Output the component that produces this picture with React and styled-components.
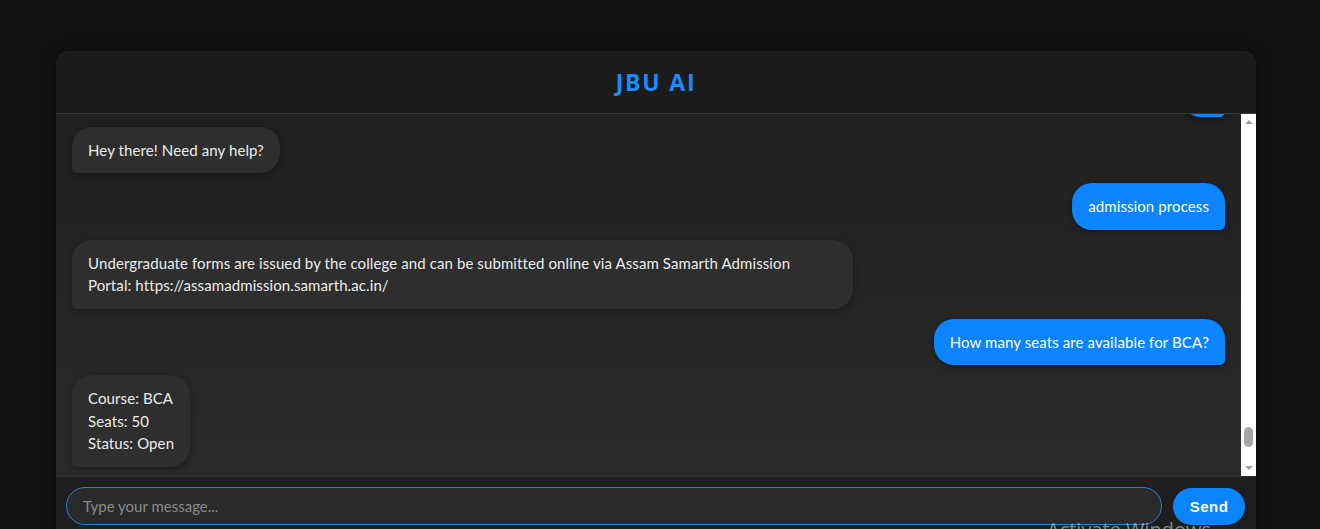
import React, { useLayoutEffect, useRef, useState } from 'react';
import styled, { createGlobalStyle } from 'styled-components';

const GlobalStyle = createGlobalStyle`
  html, body { margin: 0; padding: 0; height: 100%; overflow: hidden; background: #121212; }
  body { font-family: Lato, "Noto Sans", sans-serif; }
  *, *::before, *::after { box-sizing: border-box; }
`;

const Page = styled.div`
  padding: 51px 0 0 56px;
  display: flex;
`;

const Chat = styled.div`
  width: 1200px;
  height: 500px;
  display: flex;
  flex-direction: column;
  background: #1e1e1e;
  border-radius: 12px;
  overflow: hidden;
  box-shadow: 0 0 18px rgba(0, 0, 0, 0.45);
`;

const Header = styled.header`
  height: 63px;
  flex-shrink: 0;
  display: flex;
  align-items: center;
  justify-content: center;
  background: #1b1b1b;
  border-bottom: 1px solid #343434;
`;

const Title = styled.h1`
  margin: 0;
  font-family: "Open Sans", sans-serif;
  font-weight: 700;
  font-size: 23px;
  letter-spacing: 1.8px;
  color: #1a8cff;
`;

const Pane = styled.div`
  height: 362px;
  flex-shrink: 0;
  display: flex;
  background: linear-gradient(180deg, #202020 0%, #2a2a2a 100%);
`;

const Messages = styled.div`
  flex: 1;
  min-width: 0;
  overflow-y: scroll;
  display: flex;
  flex-direction: column;
  gap: 10px;
  padding: 10px 16px 9px;
  scrollbar-width: none;
  &::-webkit-scrollbar { display: none; }
`;

const Rail = styled.div`
  width: 15px;
  flex-shrink: 0;
  display: flex;
  flex-direction: column;
  background: #ffffff;
`;

const ArrowButton = styled.div`
  height: 16px;
  flex-shrink: 0;
  display: flex;
  align-items: center;
  justify-content: center;
  &::before {
    content: '';
    width: 0;
    height: 0;
    border-left: 4px solid transparent;
    border-right: 4px solid transparent;
    ${(p) => (p.$down ? 'border-top: 4px solid #a3a3a3;' : 'border-bottom: 4px solid #a3a3a3;')}
  }
`;

const Track = styled.div`
  flex: 1;
  position: relative;
`;

const Thumb = styled.div`
  position: absolute;
  left: 3px;
  right: 3px;
  border-radius: 5px;
  background: #a6a6a6;
`;

const Bubble = styled.div`
  align-self: ${(p) => (p.$user ? 'flex-end' : 'flex-start')};
  max-width: 781px;
  padding: 12px 16px;
  font-size: 15px;
  line-height: 22.5px;
  letter-spacing: 0.1px;
  white-space: pre-line;
  color: ${(p) => (p.$user ? '#ffffff' : '#ececec')};
  background: ${(p) => (p.$user ? '#0a84ff' : '#2e2e2e')};
  border-radius: ${(p) => (p.$user ? '20px 20px 5px 20px' : '20px 20px 20px 5px')};
  box-shadow: 0 2px 6px rgba(0, 0, 0, 0.35);
`;

const InputBar = styled.form`
  flex: 1;
  display: flex;
  align-items: flex-start;
  gap: 11px;
  padding: 10px 11px 10px 10px;
  background: #1e1e1e;
  border-top: 1px solid #2f2f2f;
`;

const TextInput = styled.input`
  flex: 1;
  height: 38px;
  padding: 0 16px;
  border: 1px solid #2a7fd4;
  border-radius: 20px;
  background: #2a2a2a;
  color: #eee;
  font-family: Lato, sans-serif;
  font-size: 15px;
  outline: none;
  &::placeholder { color: #8a8a8a; }
`;

const SendButton = styled.button`
  width: 72px;
  height: 37px;
  margin-top: 1px;
  border: none;
  border-radius: 20px;
  background: #0a84ff;
  color: #fff;
  font-family: "Liberation Sans", Arial, sans-serif;
  font-weight: 700;
  font-size: 15px;
  letter-spacing: 0.5px;
  cursor: pointer;
`;

const Watermark = styled.div`
  position: fixed;
  left: 1047px;
  top: 516px;
  font-family: "Open Sans", sans-serif;
  font-size: 20px;
  color: rgba(255, 255, 255, 0.45);
  pointer-events: none;
  white-space: nowrap;
`;

const earlier = [
  ['hello', 'Hello! How can I assist you today?'],
  ['courses offered', 'JBU offers BA, BSc, BCom, BCA and several PG programmes.'],
  ['fees for BCA', 'Course: BCA\nFees: Rs. 25,000 per semester'],
  ['hostel facility', 'Yes, separate hostels are available for boys and girls.'],
  ['library timings', 'The central library is open from 9 AM to 5 PM on working days.'],
  ['contact number', 'You can reach the college office during working hours.'],
  ['thanks', 'You are welcome!'],
  ['hi', 'Hey there! Need any help?'],
];

const history = [];
for (let r = 0; r < 6; r += 1) {
  earlier.forEach(([q, a]) => {
    history.push({ user: true, text: q });
    history.push({ user: false, text: a });
  });
}
history.push({ user: true, text: 'hi' });

const recent = [
  { user: false, text: 'Hey there! Need any help?' },
  { user: true, text: 'admission process' },
  {
    user: false,
    text:
      'Undergraduate forms are issued by the college and can be submitted online via Assam Samarth Admission Portal: https://assamadmission.samarth.ac.in/',
  },
  { user: true, text: 'How many seats are available for BCA?' },
  { user: false, text: 'Course: BCA\nSeats: 50\nStatus: Open' },
];

const messages = [...history, ...recent];

const TRACK_GAP = 13;

export default function App() {
  const listRef = useRef(null);
  const trackRef = useRef(null);
  const [thumb, setThumb] = useState({ top: 0, height: 20 });

  const measure = () => {
    const el = listRef.current;
    const track = trackRef.current;
    if (!el || !track) return;
    const trackLen = track.clientHeight - TRACK_GAP;
    const height = Math.max(20, (trackLen * el.clientHeight) / el.scrollHeight);
    const range = el.scrollHeight - el.clientHeight;
    const top = range > 0 ? ((trackLen - height) * el.scrollTop) / range : 0;
    setThumb({ top, height });
  };

  useLayoutEffect(() => {
    const el = listRef.current;
    if (el) el.scrollTop = el.scrollHeight;
    measure();
  }, []);

  return (
    <>
      <GlobalStyle />
      <Page>
        <Chat>
          <Header>
            <Title>JBU AI</Title>
          </Header>
          <Pane>
            <Messages ref={listRef} onScroll={measure}>
              {messages.map((m, i) => (
                <Bubble key={i} $user={m.user}>
                  {m.text}
                </Bubble>
              ))}
            </Messages>
            <Rail>
              <ArrowButton />
              <Track ref={trackRef}>
                <Thumb style={{ top: thumb.top, height: thumb.height }} />
              </Track>
              <ArrowButton $down />
            </Rail>
          </Pane>
          <InputBar onSubmit={(e) => e.preventDefault()}>
            <TextInput type="text" placeholder="Type your message..." autoFocus />
            <SendButton type="submit">Send</SendButton>
          </InputBar>
        </Chat>
      </Page>
      <Watermark>Activate Windows</Watermark>
    </>
  );
}
